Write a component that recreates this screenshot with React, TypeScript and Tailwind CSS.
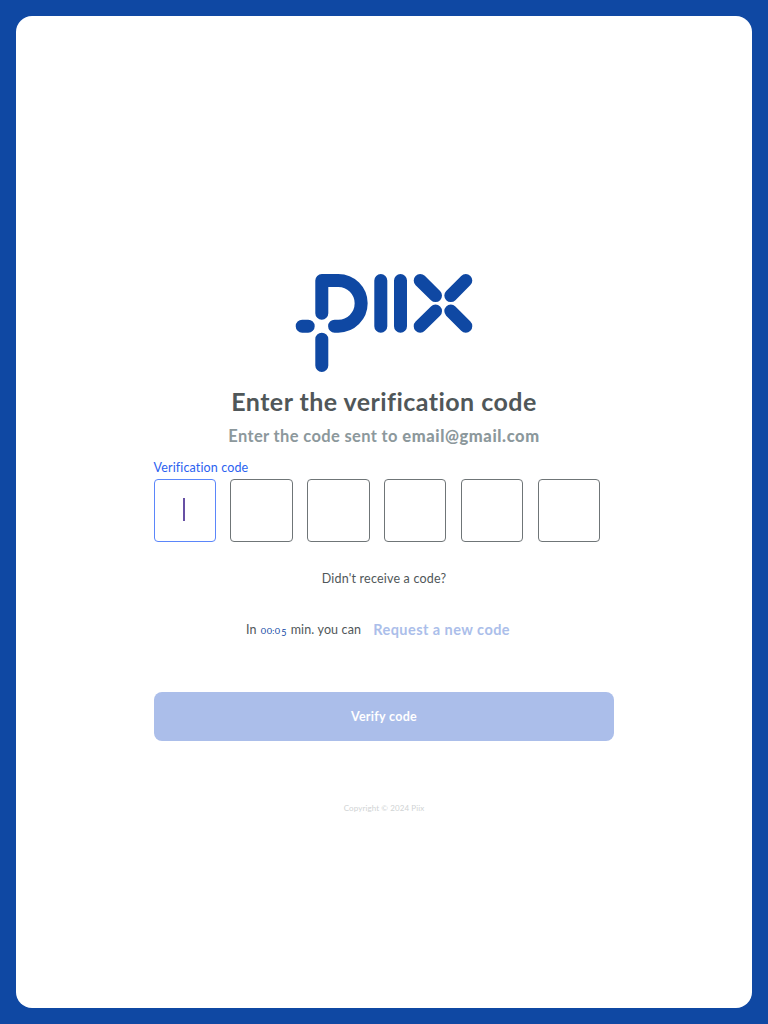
const Logo = () => (
  <svg
    className="h-[100px] w-[178px]"
    viewBox="295 273 178 100"
    fill="none"
    stroke="#0f48a3"
    strokeWidth="13"
    strokeLinecap="round"
    strokeLinejoin="round"
    role="img"
    aria-label="Piix"
  >
    <path d="M321.8 313.2V280.5H338.3A22.85 22.85 0 0 1 338.3 326.2H334.6" />
    <path d="M302.2 326.2H308.2M321.8 339.2V365.5" />
    <path d="M380.8 280.5V326.2M400.5 280.5V326.2" />
    <path d="M420.2 280.5L435.5 295.6M465.8 280.5L450.8 295.6" />
    <path d="M420.2 326.2L435.5 311.1M465.8 326.2L450.8 311.1" />
  </svg>
);

const Timer = () => (
  <span className="mx-[3px] inline-flex w-[28px] items-baseline justify-between px-[1px] text-[8px] tracking-normal text-[#0f48a3]">
    <span className="scale-x-115">0</span>
    <span className="ml-[1px] scale-x-115">0</span>
    <span>:</span>
    <span className="scale-x-115">0</span>
    <span className="relative top-[2px] ml-[1px] text-[9px]">5</span>
  </span>
);

export default function App() {
  return (
    <div className="flex h-screen bg-[#0f48a3] p-4 font-['Lato',sans-serif]">
      <main className="flex flex-1 flex-col items-center rounded-[16px] bg-white pt-[257px]">
        <Logo />
        <h1 className="mt-[12px] text-[25px] leading-[32px] font-bold tracking-[0.45px] whitespace-nowrap text-[#505759]">
          Enter the verification code
        </h1>
        <p className="mt-[7px] text-[16.5px] leading-[24px] font-bold tracking-[0.35px] whitespace-nowrap text-[#8c989c]">
          Enter the code sent to <b className="tracking-[0.6px]">email@gmail.com</b>
        </p>
        <div className="mt-[12px] w-[460.8px]">
          <div className="text-[12.5px] leading-[16px] tracking-[0.13px] text-[#2b62f0]">Verification code</div>
          <div className="mt-[3px] grid grid-cols-6">
            <div className="flex h-[63px] w-[62.4px] items-center justify-center rounded-[4px] border border-[#5b86fa]">
              <span className="mr-[2px] mb-[2px] h-[23px] w-[2px] bg-[#6750a4]" />
            </div>
            {[1, 2, 3, 4, 5].map((i) => (
              <div key={i} className="h-[63px] w-[62.4px] rounded-[4px] border border-[#6f7577]" />
            ))}
          </div>
        </div>
        <p className="mt-[29px] text-[12.5px] leading-[16px] tracking-[0.2px] text-[#505759]">Didn't receive a code?</p>
        <div className="mt-[33px] mr-[12px] flex h-[20px] items-center gap-[12px] whitespace-nowrap">
          <span className="text-[12.5px] tracking-[0.15px] text-[#505759]">
            In
            <Timer />
            min. you can
          </span>
          <span className="text-[14.5px] font-bold tracking-[0.45px] text-[#abbeea]">Request a new code</span>
        </div>
        <button className="mt-[52px] h-[49px] w-[460.8px] rounded-[8px] bg-[#abbeea] pt-[2px] text-[12.5px] font-bold tracking-[0.3px] text-white">
          Verify code
        </button>
        <footer className="mt-[61px] text-[8px] leading-[12px] tracking-[0.1px] text-[#d0d3d4]">
          Copyright © 2024 Piix
        </footer>
      </main>
    </div>
  );
}
